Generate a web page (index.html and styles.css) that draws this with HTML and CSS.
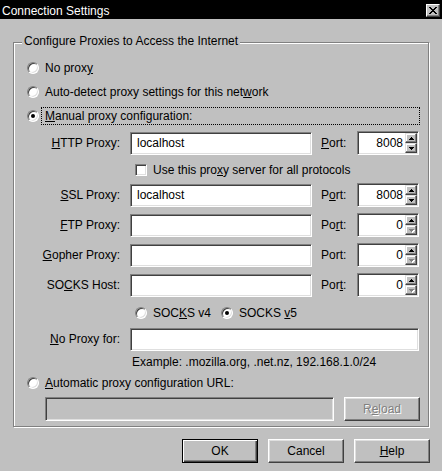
FILE: index.html
```html
<!DOCTYPE html>
<html>
<head>
<meta charset="utf-8">
<title>Connection Settings</title>
<link rel="stylesheet" href="styles.css">
</head>
<body>
<div class="titlebar">
  <span class="title">Connection Settings</span>
  <span class="close"><svg width="8" height="7" viewBox="0 0 8 7"><path d="M0 0h2v1h1v1h2V1h1V0h2v1H7v1H6v1H5v1h1v1h1v1h1v1H6V6H5V5H3v1H2v1H0V6h1V5h1V4h1V3H2V2H1V1H0z" fill="#000"/></svg></span>
</div>

<div class="group">
  <div class="legend">Configure Proxies to Access the Internet</div>

  <div class="row radio-row r1"><span class="radio"></span><span class="rlabel">No prox<u>y</u></span></div>
  <div class="row radio-row r2"><span class="radio"></span><span class="rlabel">Auto-detect proxy settings for this net<u>w</u>ork</span></div>
  <div class="row radio-row r3"><span class="radio checked"></span><span class="focus"><u>M</u>anual proxy configuration:</span></div>

  <div class="row proxy-row first">
    <span class="plabel"><u>H</u>TTP Proxy:</span>
    <span class="field host">localhost</span>
    <span class="portlabel"><u>P</u>ort:</span>
    <span class="spin"><span class="spin-val">8008</span><span class="spin-btns"><span class="sb"><svg width="5" height="3" viewBox="0 0 5 3"><path d="M2 0h1v1h1v1h1v1H0V2h1V1h1z"/></svg></span><span class="sb"><svg width="5" height="3" viewBox="0 0 5 3"><path d="M0 0h5v1H4v1H3v1H2V2H1V1H0z"/></svg></span></span></span>
  </div>

  <div class="row check-row"><span class="check"></span><span class="rlabel">Use this pro<u>x</u>y server for all protocols</span></div>

  <div class="row proxy-row">
    <span class="plabel"><u>S</u>SL Proxy:</span>
    <span class="field host">localhost</span>
    <span class="portlabel">P<u>o</u>rt:</span>
    <span class="spin"><span class="spin-val">8008</span><span class="spin-btns"><span class="sb"><svg width="5" height="3" viewBox="0 0 5 3"><path d="M2 0h1v1h1v1h1v1H0V2h1V1h1z"/></svg></span><span class="sb"><svg width="5" height="3" viewBox="0 0 5 3"><path d="M0 0h5v1H4v1H3v1H2V2H1V1H0z"/></svg></span></span></span>
  </div>

  <div class="row proxy-row">
    <span class="plabel"><u>F</u>TP Proxy:</span>
    <span class="field host"></span>
    <span class="portlabel">Po<u>r</u>t:</span>
    <span class="spin"><span class="spin-val">0</span><span class="spin-btns"><span class="sb"><svg width="5" height="3" viewBox="0 0 5 3"><path d="M2 0h1v1h1v1h1v1H0V2h1V1h1z"/></svg></span><span class="sb off"><svg width="5" height="3" viewBox="0 0 5 3"><path d="M0 0h5v1H4v1H3v1H2V2H1V1H0z"/></svg></span></span></span>
  </div>

  <div class="row proxy-row">
    <span class="plabel"><u>G</u>opher Proxy:</span>
    <span class="field host"></span>
    <span class="portlabel">Port:</span>
    <span class="spin"><span class="spin-val">0</span><span class="spin-btns"><span class="sb"><svg width="5" height="3" viewBox="0 0 5 3"><path d="M2 0h1v1h1v1h1v1H0V2h1V1h1z"/></svg></span><span class="sb off"><svg width="5" height="3" viewBox="0 0 5 3"><path d="M0 0h5v1H4v1H3v1H2V2H1V1H0z"/></svg></span></span></span>
  </div>

  <div class="row proxy-row">
    <span class="plabel">SO<u>C</u>KS Host:</span>
    <span class="field host"></span>
    <span class="portlabel">Por<u>t</u>:</span>
    <span class="spin"><span class="spin-val">0</span><span class="spin-btns"><span class="sb"><svg width="5" height="3" viewBox="0 0 5 3"><path d="M2 0h1v1h1v1h1v1H0V2h1V1h1z"/></svg></span><span class="sb off"><svg width="5" height="3" viewBox="0 0 5 3"><path d="M0 0h5v1H4v1H3v1H2V2H1V1H0z"/></svg></span></span></span>
  </div>

  <div class="row socks-row">
    <span class="radio"></span><span class="rlabel v4">SOC<u>K</u>S v4</span>
    <span class="radio checked"></span><span class="rlabel">SOCKS <u>v</u>5</span>
  </div>

  <div class="row noproxy-row">
    <span class="plabel"><u>N</u>o Proxy for:</span>
    <span class="field wide"></span>
  </div>

  <div class="row example-row">Example: .mozilla.org, .net.nz, 192.168.1.0/24</div>

  <div class="row radio-row r4"><span class="radio"></span><span class="rlabel"><u>A</u>utomatic proxy configuration URL:</span></div>

  <div class="row url-row">
    <span class="field url disabled"></span>
    <span class="btn reload disabled">R<u>e</u>load</span>
  </div>
</div>

<div class="buttons">
  <span class="btn default">OK</span>
  <span class="btn">Cancel</span>
  <span class="btn"><u>H</u>elp</span>
</div>
</body>
</html>
```

FILE: styles.css
```css
* { box-sizing: border-box; }
html, body { margin: 0; padding: 0; }
body {
  background: #c0c0c0;
  font-family: "Liberation Sans", Arial, sans-serif;
  font-size: 12px;
  line-height: 14px;
  color: #000;
  width: 442px;
  height: 471px;
  overflow: hidden;
}
u { text-decoration: underline; text-underline-offset: 1px; }

.titlebar {
  height: 19px;
  background: #000;
  color: #fff;
  display: flex;
  align-items: flex-start;
  justify-content: space-between;
}
.title { padding: 4px 0 0 2px; }
.close {
  width: 14px;
  height: 13px;
  margin: 4px 2px 0 0;
  background: #c0c0c0;
  border: 1px solid;
  border-color: #fff #404040 #404040 #fff;
  box-shadow: inset -1px -1px #808080;
  display: flex;
  align-items: center;
  justify-content: center;
}

.group {
  margin: 23px 13px 0 13px;
  border: 1px solid #808080;
  box-shadow: inset 1px 1px #fff, 1px 1px #fff;
  padding: 0 0 5px 0;
  display: flex;
  flex-direction: column;
}
.legend {
  margin: -9px 0 0 8px;
  padding: 0 2px;
  background: #c0c0c0;
  width: max-content;
  height: 14px;
}

.row { display: flex; align-items: center; }

.radio-row { height: 14px; padding-left: 13px; }
.r1 { margin-top: 13px; }
.r2 { margin-top: 10px; }
.r3 { margin-top: 8px; height: 18px; }
.r4 { margin-top: 7px; }

.radio, .check {
  width: 12px;
  height: 12px;
  flex: none;
  background: #fff;
  border: 1px solid;
  border-color: #808080 #fff #fff #808080;
  box-shadow: inset 1px 1px #404040, inset -1px -1px #dfdfdf;
  display: flex;
  align-items: center;
  justify-content: center;
}
.radio { border-radius: 50%; }
.radio.checked::after {
  content: "";
  width: 4px;
  height: 4px;
  border-radius: 50%;
  background: #000;
}
.rlabel { margin-left: 6px; white-space: nowrap; }

.focus {
  margin: 0 8px 0 2px;
  flex: 1;
  height: 18px;
  border: 1px dotted #000;
  padding-left: 3px;
  display: flex;
  align-items: center;
}

.proxy-row { height: 24px; margin-top: 6px; }
.proxy-row.first { margin-top: 6px; }
.plabel { width: 106px; text-align: right; flex: none; white-space: nowrap; }
.field {
  height: 23px;
  background: #fff;
  border: 1px solid;
  border-color: #808080 #fff #fff #808080;
  box-shadow: inset 1px 1px #404040, inset -1px -1px #dfdfdf;
  padding-left: 6px;
  display: flex;
  align-items: center;
  flex: none;
}
.host { width: 182px; margin-left: 10px; }
.portlabel { width: 45px; padding-left: 9px; flex: none; }
.spin {
  width: 62px;
  height: 24px;
  flex: none;
  background: #fff;
  border: 1px solid;
  border-color: #808080 #fff #fff #808080;
  box-shadow: inset 1px 1px #404040, inset -1px -1px #dfdfdf;
  padding: 1px;
  display: flex;
}
.spin-val { flex: 1; text-align: right; padding-right: 2px; align-self: center; }
.spin-btns { width: 12px; display: flex; flex-direction: column; }
.sb {
  flex: 1;
  background: #c0c0c0;
  border: 1px solid;
  border-color: #dfdfdf #404040 #404040 #dfdfdf;
  box-shadow: inset -1px -1px #808080, inset 1px 1px #fff;
  display: flex;
  align-items: center;
  justify-content: center;
}
.sb svg { fill: #000; display: block; }
.sb.off svg { fill: #808080; filter: drop-shadow(1px 1px 0 #fff); }

.check-row { height: 14px; margin-top: 8px; padding-left: 121px; }

.socks-row { height: 14px; margin-top: 9px; padding-left: 121px; }
.rlabel.v4 { width: 62px; margin-right: 6px; flex: none; }

.noproxy-row { height: 24px; margin-top: 7px; }
.wide { width: 289px; margin-left: 10px; }

.example-row { height: 14px; margin-top: 4px; padding-left: 118px; white-space: nowrap; }

.url-row { height: 24px; margin-top: 7px; padding-left: 31px; }
.url { width: 289px; height: 24px; }
.field.disabled { background: #c0c0c0; }

.btn {
  width: 76px;
  height: 24px;
  flex: none;
  background: #c0c0c0;
  border: 1px solid;
  border-color: #fff #404040 #404040 #fff;
  box-shadow: inset -1px -1px #808080, inset 1px 1px #dfdfdf;
  display: flex;
  align-items: center;
  justify-content: center;
}
.btn.default {
  border-color: #000;
  box-shadow: inset 1px 1px #fff, inset -1px -1px #404040, inset -2px -2px #808080;
}
.btn.disabled { color: #808080; text-shadow: 1px 1px 0 #fff; }
.reload { margin-left: 10px; }

.buttons {
  display: flex;
  justify-content: flex-end;
  gap: 10px;
  margin: 12px 12px 0 0;
}
```
